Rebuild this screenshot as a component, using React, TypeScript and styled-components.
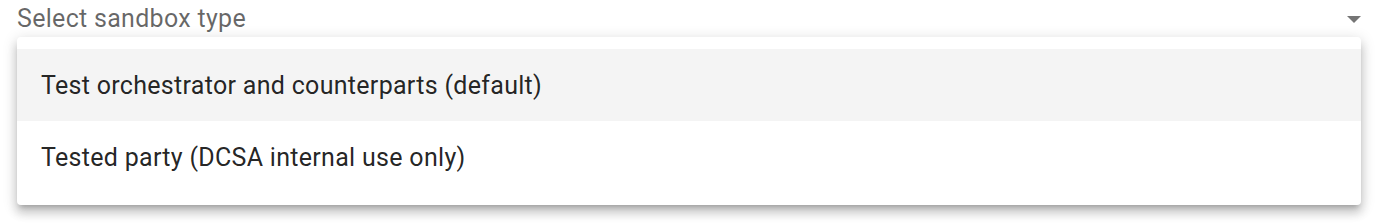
import styled, { createGlobalStyle } from 'styled-components';

const GlobalStyle = createGlobalStyle`
  html, body {
    margin: 0;
    padding: 0;
    background: #ffffff;
    font-family: Roboto, 'Liberation Sans', sans-serif;
  }
`;

const options = [
  'Test orchestrator and counterparts (default)',
  'Tested party (DCSA internal use only)',
];

const App = () => {
  return (
    <>
      <GlobalStyle />
      <SelectWrap>
        <Trigger>
          <Placeholder>Select sandbox type</Placeholder>
          <Arrow />
        </Trigger>
        <Panel role="listbox">
          {options.map((label, i) => (
            <Option key={label} $active={i === 0}>
              {label}
            </Option>
          ))}
        </Panel>
      </SelectWrap>
    </>
  );
};

export default App;

const SelectWrap = styled.div`
  position: relative;
  width: 100%;
  height: 223px;
`;

const Trigger = styled.div`
  display: flex;
  align-items: center;
  justify-content: space-between;
  height: 37px;
  padding: 0 16px 0 17px;
  box-sizing: border-box;
`;

const Placeholder = styled.span`
  font-size: 25px;
  line-height: 25px;
  color: rgba(0, 0, 0, 0.6);
  letter-spacing: 0.3px;
`;

const Arrow = styled.span`
  width: 0;
  height: 0;
  border-left: 7px solid transparent;
  border-right: 7px solid transparent;
  border-top: 7px solid rgba(0, 0, 0, 0.54);
  margin-top: 1px;
`;

const Panel = styled.div`
  position: absolute;
  top: 37px;
  left: 17px;
  right: 16px;
  padding: 12px 0;
  background: #ffffff;
  border-radius: 4px;
  box-shadow: 0 5px 5px -3px rgba(0, 0, 0, 0.2), 0 8px 10px 1px rgba(0, 0, 0, 0.14),
    0 3px 14px 2px rgba(0, 0, 0, 0.12);
  display: flex;
  flex-direction: column;
`;

const Option = styled.div<{ $active?: boolean }>`
  display: flex;
  align-items: center;
  height: 72px;
  padding: 0 24px;
  font-size: 25px;
  color: rgba(0, 0, 0, 0.87);
  letter-spacing: 0.3px;
  background: ${(p) => (p.$active ? '#f4f4f4' : 'transparent')};
`;
